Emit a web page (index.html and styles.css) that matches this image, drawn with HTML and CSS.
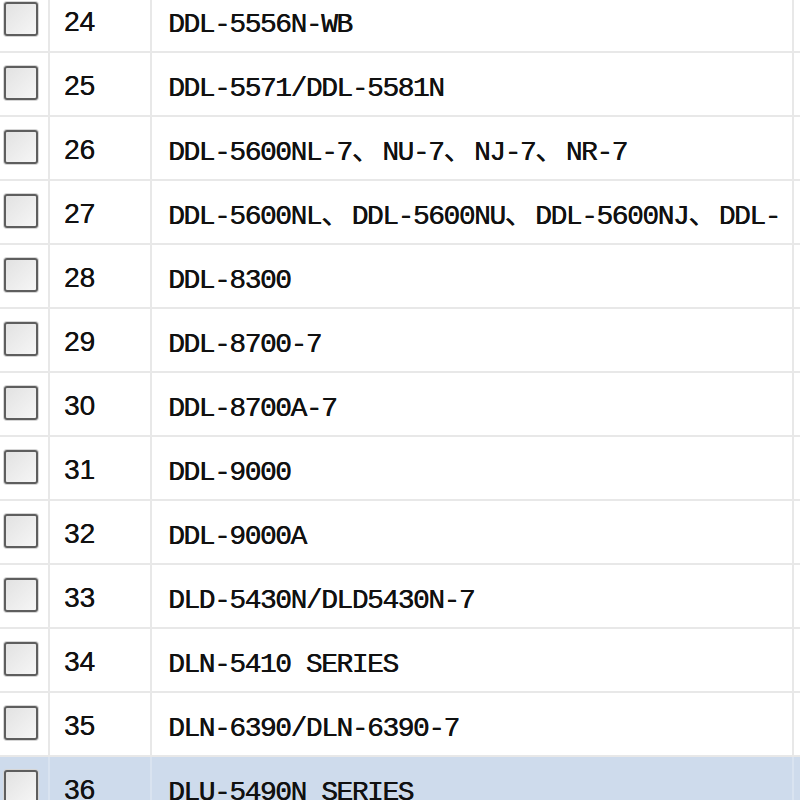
FILE: index.html
```html
<!DOCTYPE html>
<html lang="zh">
<head>
  <meta charset="UTF-8" />
  <title>型号列表</title>
  <link rel="stylesheet" href="styles.css">
</head>
<body>
  <div class="list-view">
    <table class="model-table">
      <tbody>
        <tr><td class="col-check"><span class="box"></span></td><td class="col-no">24</td><td class="col-name">DDL-5556N-WB</td><td class="col-rest"></td></tr>
        <tr><td class="col-check"><span class="box"></span></td><td class="col-no">25</td><td class="col-name">DDL-5571/DDL-5581N</td><td class="col-rest"></td></tr>
        <tr><td class="col-check"><span class="box"></span></td><td class="col-no">26</td><td class="col-name">DDL-5600NL-7<span class="dun">、</span>NU-7<span class="dun">、</span>NJ-7<span class="dun">、</span>NR-7</td><td class="col-rest"></td></tr>
        <tr><td class="col-check"><span class="box"></span></td><td class="col-no">27</td><td class="col-name">DDL-5600NL<span class="dun">、</span>DDL-5600NU<span class="dun">、</span>DDL-5600NJ<span class="dun">、</span>DDL-</td><td class="col-rest"></td></tr>
        <tr><td class="col-check"><span class="box"></span></td><td class="col-no">28</td><td class="col-name">DDL-8300</td><td class="col-rest"></td></tr>
        <tr><td class="col-check"><span class="box"></span></td><td class="col-no">29</td><td class="col-name">DDL-8700-7</td><td class="col-rest"></td></tr>
        <tr><td class="col-check"><span class="box"></span></td><td class="col-no">30</td><td class="col-name">DDL-8700A-7</td><td class="col-rest"></td></tr>
        <tr><td class="col-check"><span class="box"></span></td><td class="col-no">31</td><td class="col-name">DDL-9000</td><td class="col-rest"></td></tr>
        <tr><td class="col-check"><span class="box"></span></td><td class="col-no">32</td><td class="col-name">DDL-9000A</td><td class="col-rest"></td></tr>
        <tr><td class="col-check"><span class="box"></span></td><td class="col-no">33</td><td class="col-name">DLD-5430N/DLD5430N-7</td><td class="col-rest"></td></tr>
        <tr><td class="col-check"><span class="box"></span></td><td class="col-no">34</td><td class="col-name">DLN-5410 SERIES</td><td class="col-rest"></td></tr>
        <tr><td class="col-check"><span class="box"></span></td><td class="col-no">35</td><td class="col-name">DLN-6390/DLN-6390-7</td><td class="col-rest"></td></tr>
        <tr class="selected"><td class="col-check"><span class="box"></span></td><td class="col-no">36</td><td class="col-name">DLU-5490N SERIES</td><td class="col-rest"></td></tr>
      </tbody>
    </table>
  </div>
</body>
</html>
```

FILE: styles.css
```css
body {
  margin: 0;
  background-color: #ffffff;
  color: #111;
}
.list-view {
  width: 800px;
  height: 800px;
  overflow: hidden;
}
.model-table {
  margin-top: -11px;
  width: 830px;
  table-layout: fixed;
  border-collapse: separate;
  border-spacing: 0;
}
.model-table td {
  box-sizing: border-box;
  height: 64px;
  padding: 4px 0 0 0;
  line-height: 30px;
  border-right: 2px solid #e8e8e8;
  border-bottom: 2px solid #e8e8e8;
  white-space: nowrap;
  overflow: hidden;
  vertical-align: middle;
}
.col-check {
  width: 50px;
}
.model-table td.col-check {
  padding: 0 0 2px 4px;
}
.col-no {
  width: 102px;
  padding-left: 14px !important;
  font-family: "Liberation Sans", Arial, sans-serif;
  font-size: 28px;
  text-shadow: 0.3px 0 0 #111;
}
.model-table td.col-name {
  width: 642px;
  padding: 10px 0 0 16px;
  font-family: "Liberation Mono", "Noto Sans CJK SC", monospace;
  font-size: 28px;
  letter-spacing: -1.5px;
  text-shadow: 0.4px 0 0 #111;
}
.col-rest {
  width: 36px;
}
.dun {
  margin-right: 4px;
}
.box {
  display: block;
  width: 30px;
  height: 30px;
  border: 2px solid #5e5e5e;
  border-radius: 3px;
  background: linear-gradient(135deg, #e2e2e2, #f6f6f6);
  box-shadow: 0 0 0 1px #d6d6d6;
}
.selected td {
  background-color: #cedbec;
  border-bottom-color: #cedbec;
  border-right-color: #d9e3f0;
}
```
